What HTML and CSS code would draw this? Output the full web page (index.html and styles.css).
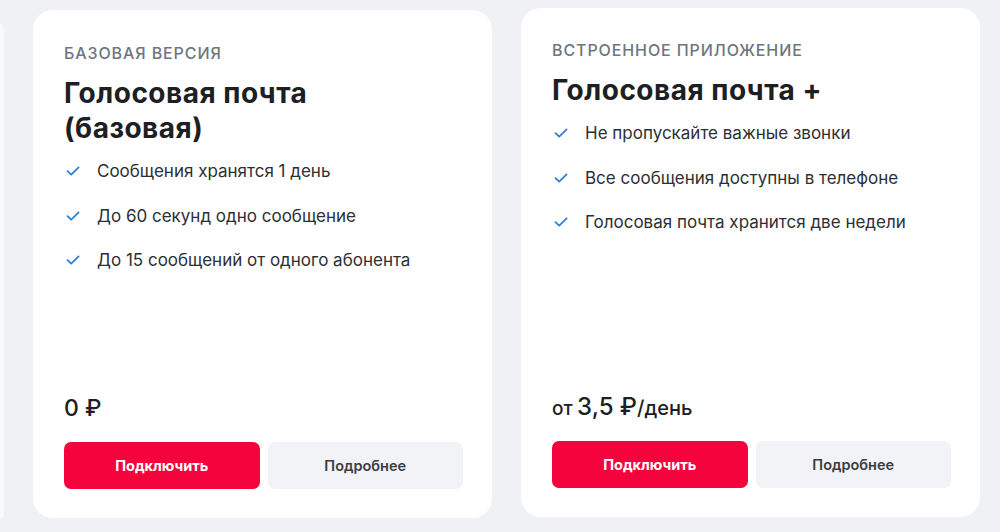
FILE: index.html
```html
<!DOCTYPE html>
<html lang="ru">
<head>
<meta charset="utf-8">
<title>Голосовая почта</title>
<link rel="stylesheet" href="styles.css">
</head>
<body>
<div class="row">
  <div class="sliver"></div>
  <section class="card">
    <div class="label">Базовая версия</div>
    <h2 class="title">Голосовая почта<br>(базовая)</h2>
    <ul class="features">
      <li><svg class="check" viewBox="0 0 14 10"><path d="M1.5 5.2 L5.2 8.6 L12.6 1.4"/></svg>Сообщения хранятся 1 день</li>
      <li><svg class="check" viewBox="0 0 14 10"><path d="M1.5 5.2 L5.2 8.6 L12.6 1.4"/></svg>До 60 секунд одно сообщение</li>
      <li><svg class="check" viewBox="0 0 14 10"><path d="M1.5 5.2 L5.2 8.6 L12.6 1.4"/></svg>До 15 сообщений от одного абонента</li>
    </ul>
    <div class="price"><span class="amount">0 ₽</span></div>
    <div class="actions">
      <button class="btn btn-primary">Подключить</button>
      <button class="btn btn-secondary">Подробнее</button>
    </div>
  </section>
  <section class="card card-alt">
    <div class="label">Встроенное приложение</div>
    <h2 class="title">Голосовая почта +</h2>
    <ul class="features">
      <li><svg class="check" viewBox="0 0 14 10"><path d="M1.5 5.2 L5.2 8.6 L12.6 1.4"/></svg>Не пропускайте важные звонки</li>
      <li><svg class="check" viewBox="0 0 14 10"><path d="M1.5 5.2 L5.2 8.6 L12.6 1.4"/></svg>Все сообщения доступны в телефоне</li>
      <li><svg class="check" viewBox="0 0 14 10"><path d="M1.5 5.2 L5.2 8.6 L12.6 1.4"/></svg>Голосовая почта хранится две недели</li>
    </ul>
    <div class="price"><span class="from">от</span> <span class="amount big">3,5 ₽</span><span class="unit">/день</span></div>
    <div class="actions">
      <button class="btn btn-primary">Подключить</button>
      <button class="btn btn-secondary">Подробнее</button>
    </div>
  </section>
</div>
</body>
</html>
```
FILE: styles.css
```css
* { box-sizing: border-box; }
html, body {
  margin: 0;
  padding: 0;
  background: #eff1f4;
  font-family: Inter, "Noto Sans", sans-serif;
  color: #1d2023;
}
.row {
  display: flex;
  align-items: flex-start;
  gap: 29px;
  padding-top: 10px;
  height: 532px;
  overflow: hidden;
}
.sliver {
  width: 4px;
  height: 494px;
  margin-top: 14px;
  background: #f8f9fa;
  border-radius: 0 4px 4px 0;
  flex: none;
}
.card {
  flex: none;
  width: 459px;
  height: 508px;
  background: #ffffff;
  border-radius: 20px;
  padding: 33px 29px 29px 31px;
  display: flex;
  flex-direction: column;
}
.card-alt {
  margin-top: -2px;
  height: 509px;
  padding-top: 32px;
}
.label {
  font-size: 16px;
  line-height: 20px;
  font-weight: 500;
  color: #6e7680;
  text-transform: uppercase;
  letter-spacing: 0.9px;
}
.title {
  margin: 13px 0 0;
  font-size: 28px;
  line-height: 35px;
  font-weight: 700;
  letter-spacing: 0.5px;
  color: #1d2023;
}
.features {
  list-style: none;
  margin: 13px 0 0;
  padding: 0;
  display: flex;
  flex-direction: column;
  gap: 20.5px;
}
.features li {
  display: flex;
  align-items: center;
  font-size: 17px;
  line-height: 24px;
  color: #2c2f33;
}
.check {
  width: 14px;
  height: 10px;
  margin: 0 17px 0 2px;
  flex: none;
}
.check path {
  fill: none;
  stroke: #2f7fd6;
  stroke-width: 1.8;
  stroke-linecap: round;
  stroke-linejoin: round;
}
.price {
  margin-top: auto;
  line-height: 30px;
  color: #1d2023;
}
.price .amount {
  font-size: 23px;
  font-weight: 500;
}
.price .from {
  font-size: 19px;
  font-weight: 500;
}
.price .big {
  font-size: 24px;
}
.price .unit {
  font-size: 20px;
  font-weight: 500;
}
.actions {
  display: flex;
  gap: 8px;
  margin-top: 17px;
}
.btn {
  flex: 1;
  height: 47px;
  border: 0;
  border-radius: 7px;
  font-family: Inter, "Noto Sans", sans-serif;
  font-size: 14.5px;
  font-weight: 700;
}
.btn-primary {
  background: #f4033c;
  color: #ffffff;
}
.btn-secondary {
  background: #f2f3f6;
  color: #3a3d42;
  font-weight: 600;
}
```
